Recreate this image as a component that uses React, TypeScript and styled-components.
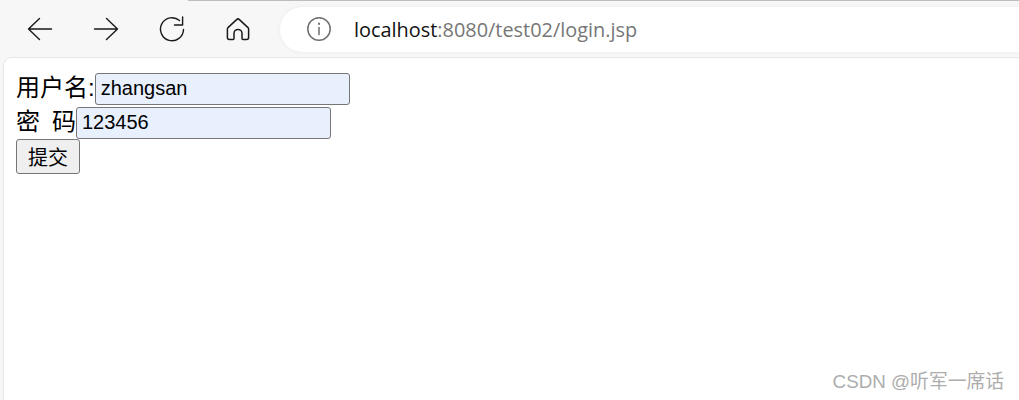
import React from "react";
import styled, { createGlobalStyle } from "styled-components";

const GlobalStyle = createGlobalStyle`
  html, body {
    margin: 0;
    padding: 0;
    width: 1019px;
    height: 400px;
    overflow: hidden;
    background: #f7f7f7;
  }
`;

const BackIcon = () => (
  <svg width="28" height="28" viewBox="0 0 28 28" fill="none" stroke="#1a1a1a" strokeWidth="1.4" strokeLinecap="round" strokeLinejoin="round">
    <path d="M2.5 14H25.5M13.5 3.5L2.5 14L13.5 24.5" />
  </svg>
);

const ForwardIcon = () => (
  <svg width="28" height="28" viewBox="0 0 28 28" fill="none" stroke="#1a1a1a" strokeWidth="1.4" strokeLinecap="round" strokeLinejoin="round">
    <path d="M2.5 14H25.5M14.5 3.5L25.5 14L14.5 24.5" />
  </svg>
);

const ReloadIcon = () => (
  <svg width="28" height="28" viewBox="0 0 28 28" fill="none" stroke="#1a1a1a" strokeWidth="1.4" strokeLinecap="round" strokeLinejoin="round">
    <path d="M25.5 14.5A11.5 11.5 0 1 1 21.5 5.5" />
    <path d="M16.5 10H24.6V2" />
  </svg>
);

const HomeIcon = () => (
  <svg width="28" height="28" viewBox="0 0 28 28" fill="none" stroke="#1a1a1a" strokeWidth="1.5" strokeLinecap="round" strokeLinejoin="round">
    <path d="M4 12.6L12.6 4.6a2 2 0 0 1 2.8 0L24 12.6a2.4 2.4 0 0 1 .6 1.6V22.6a2 2 0 0 1-2 2H19a1 1 0 0 1-1-1V18.4a4 4 0 0 0-8 0V23.6a1 1 0 0 1-1 1H5.4a2 2 0 0 1-2-2V14.2A2.4 2.4 0 0 1 4 12.6Z" />
  </svg>
);

const InfoIcon = () => (
  <svg width="26" height="26" viewBox="0 0 26 26" fill="none" stroke="#6e6e6e" strokeWidth="1.5" strokeLinecap="round">
    <circle cx="13" cy="13" r="11.2" />
    <path d="M13 11.5V18.5" />
    <path d="M13 7.4V8" strokeWidth="2" />
  </svg>
);

export default function App() {
  return (
    <>
      <GlobalStyle />
      <Window>
        <TabEdge />
        <Toolbar>
          <NavButtons>
            <NavButton><BackIcon /></NavButton>
            <NavButton><ForwardIcon /></NavButton>
            <NavButton><ReloadIcon /></NavButton>
            <NavButton><HomeIcon /></NavButton>
          </NavButtons>
          <AddressBar>
            <InfoIcon />
            <Url>
              <Host>localhost</Host>:8080/test02/login.jsp
            </Url>
          </AddressBar>
        </Toolbar>
        <Page>
          <Form>
            <FieldRow $height={34}>
              <Label>用户名:</Label>
              <TextInput defaultValue="zhangsan" />
            </FieldRow>
            <FieldRow $height={32}>
              <PasswordLabel>密&nbsp;&nbsp;码</PasswordLabel>
              <TextInput defaultValue="123456" />
            </FieldRow>
            <SubmitButton type="button">提交</SubmitButton>
          </Form>
          <Watermark>CSDN @听军一席话</Watermark>
        </Page>
      </Window>
    </>
  );
}

const Window = styled.div`
  display: flex;
  flex-direction: column;
  width: 1019px;
  height: 400px;
  background: #f7f7f7;
  overflow: hidden;
`;

const TabEdge = styled.div`
  height: 1px;
  margin-left: 188px;
  background: #bdbdbd;
  flex: none;
`;

const Toolbar = styled.div`
  display: flex;
  align-items: center;
  height: 56px;
  flex: none;
  box-sizing: border-box;
  padding: 5px 0 5px 26px;
`;

const NavButtons = styled.div`
  display: flex;
  gap: 38px;
  width: 254px;
  flex: none;
`;

const NavButton = styled.div`
  display: flex;
  width: 28px;
  height: 28px;
`;

const AddressBar = styled.div`
  display: flex;
  align-items: center;
  flex: 1;
  height: 45px;
  padding-left: 26px;
  gap: 22px;
  background: #fff;
  border-radius: 23px 0 0 23px;
  box-shadow: 0 0 4px rgba(0, 0, 0, 0.06);
`;

const Url = styled.span`
  font-family: "Open Sans", "Noto Sans", sans-serif;
  font-size: 19.9px;
  color: #767676;
  white-space: nowrap;
`;

const Host = styled.span`
  color: #111;
`;

const Page = styled.div`
  position: relative;
  flex: 1;
  margin-left: 3px;
  background: #fff;
  border-top: 1px solid #e6e6e6;
  border-left: 1px solid #e6e6e6;
  border-top-left-radius: 9px;
  padding: 15px 0 0 12px;
`;

const Form = styled.form`
  display: flex;
  flex-direction: column;
  align-items: flex-start;
  font-family: "Liberation Sans", "Noto Sans CJK SC", sans-serif;
  font-size: 24px;
  color: #000;
`;

const FieldRow = styled.div<{ $height: number }>`
  display: flex;
  align-items: flex-start;
  height: ${(p) => p.$height}px;
`;

const Label = styled.label`
  font-size: 24px;
  line-height: 29px;
  white-space: nowrap;
`;

const PasswordLabel = styled(Label)`
  word-spacing: -0.7px;
`;

const TextInput = styled.input`
  box-sizing: border-box;
  width: 255px;
  height: 32px;
  margin: 0;
  padding: 0 5px 2px;
  font-family: "Liberation Sans", sans-serif;
  font-size: 20px;
  color: #000;
  background: #e8f0fe;
  border: 1px solid #767676;
  border-radius: 3px;
  outline: none;
`;

const SubmitButton = styled.button`
  box-sizing: border-box;
  width: 64px;
  height: 35px;
  margin: 0;
  padding: 0;
  font-family: "Noto Sans CJK SC", sans-serif;
  font-size: 20px;
  color: #000;
  background: #efefef;
  border: 1px solid #767676;
  border-radius: 3px;
`;

const Watermark = styled.div`
  position: absolute;
  right: 15px;
  bottom: 7px;
  font-family: "Liberation Sans", "Noto Sans CJK SC", sans-serif;
  font-size: 18.8px;
  color: #adadad;
  white-space: nowrap;
`;
